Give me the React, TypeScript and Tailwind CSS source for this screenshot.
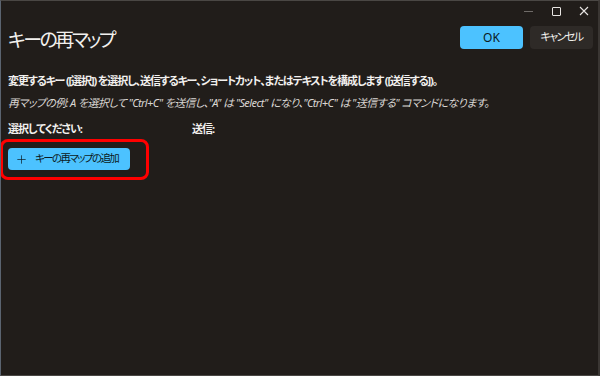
import { Plus } from "lucide-react";

const jp = "font-['Noto_Sans','Noto_Sans_CJK_JP',sans-serif] [font-feature-settings:'palt']";

function TitleBar() {
  return (
    <div className="flex h-[20px] items-center justify-end">
      <span className="flex w-[28px] justify-center">
        <span className="block h-px w-[9px] bg-[#6f6b68]" />
      </span>
      <span className="flex w-[28px] justify-center">
        <span className="block h-[9px] w-[9px] rounded-[1px] border border-[#e8e6e3]" />
      </span>
      <span className="flex w-[28px] justify-center">
        <svg width="10" height="10" viewBox="0 0 10 10">
          <path d="M1 1L9 9M9 1L1 9" stroke="#e8e6e3" strokeWidth="1.1" />
        </svg>
      </span>
    </div>
  );
}

export default function App() {
  return (
    <div
      className={`${jp} h-[376px] w-[600px] overflow-hidden border-t border-l border-r-2 border-b border-t-[#4a4744] border-l-[#5b6470] border-r-[#3a3633] border-b-[#4a4744] bg-[#211d1a] text-white`}
    >
      <TitleBar />
      <div className="flex items-start justify-between pl-[7px] pr-[5px]">
        <h1 className="mt-[7px] whitespace-nowrap text-[19px] leading-[24px] tracking-[-2.5px] text-[#f2f0ee]">
          キーの再マップ
        </h1>
        <div className="mt-[5px] flex gap-[7px]">
          <button className="h-[23px] w-[63px] rounded-[4px] bg-[#4cc2ff] text-[12px] text-[#0b1a22]">
            OK
          </button>
          <button className="h-[23px] w-[63px] whitespace-nowrap rounded-[4px] bg-[#2e2a27] text-[11px] tracking-[-1.5px] text-[#f2f0ee]">
            キャンセル
          </button>
        </div>
      </div>

      <div className="pl-[7px]">
        <p className="mt-[22px] whitespace-nowrap text-[11px] leading-[14px] font-bold tracking-[-1.1px] text-[#f2f0ee]">
          変更するキー ([選択]) を選択し、送信するキー、ショートカット、またはテキストを構成します ([送信する])。
        </p>
        <p className="mt-[8px] whitespace-nowrap text-[11px] leading-[14px] italic tracking-[-0.6px] text-[#d9d6d3]">
          再マップの例: A を選択して "Ctrl+C" を送信し、"A" は "Select" になり、"Ctrl+C" は "送信する" コマンドになります。
        </p>
        <div className="mt-[12px] flex whitespace-nowrap text-[11px] leading-[14px] font-bold tracking-[-1px] text-[#f2f0ee]">
          <span className="w-[184px]">選択してください:</span>
          <span>送信:</span>
        </div>
      </div>

      <div className="relative ml-[7px] mt-[12px] w-fit">
        <button className="flex h-[22px] w-[122px] items-center gap-[7px] whitespace-nowrap rounded-[4px] bg-[#4cc2ff] pl-[7px] text-[10.5px] tracking-[-1.6px] text-[#0b1a22]">
          <Plus size={13} strokeWidth={1.3} className="shrink-0" />
          <span>キーの再マップの追加</span>
        </button>
        <div className="pointer-events-none absolute -top-[9px] -left-[8px] h-[41px] w-[149px] rounded-[8px] border-[3px] border-[#ff0000]" />
      </div>
    </div>
  );
}
